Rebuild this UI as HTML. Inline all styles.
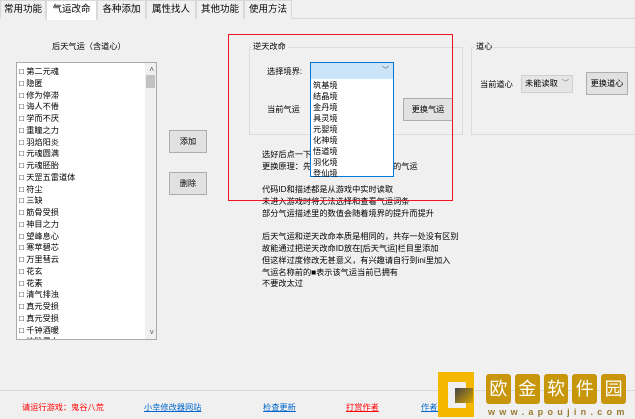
<!DOCTYPE html>
<html><head><meta charset="utf-8"><style>
*{box-sizing:border-box;margin:0;padding:0}
body{width:635px;height:419px;background:#f0f0f0;font-family:"Liberation Sans","Noto Sans CJK SC",sans-serif;font-size:8.2px;color:#000;position:relative;overflow:hidden}
.a{position:absolute;white-space:nowrap;line-height:12px}
.tab{position:absolute;top:0;height:19px;line-height:18px;text-align:center;border:1px solid #d9d9d9;border-bottom:none;background:#f0f0f0;font-size:9.5px}
.btn{position:absolute;background:#e1e1e1;border:1px solid #adadad;text-align:center}
.gb{position:absolute;border:1px solid #dcdcdc}
.gl{position:absolute;background:#f0f0f0;padding:0 2px;line-height:12px}
</style></head><body>
<div style="position:absolute;left:0;top:18px;width:635px;height:1px;background:#d9d9d9"></div>
<div class="tab" style="left:0;width:46px">常用功能</div>
<div class="tab" style="left:46px;width:51px;background:#fff;height:20px">气运改命</div>
<div class="tab" style="left:97px;width:49px">各种添加</div>
<div class="tab" style="left:146px;width:50px">属性找人</div>
<div class="tab" style="left:196px;width:48px">其他功能</div>
<div class="tab" style="left:244px;width:48px">使用方法</div>

<div class="a" style="left:52px;top:41px">后天气运（含道心）</div>
<div style="position:absolute;left:16px;top:62px;width:141px;height:278px;background:#fff;border:1px solid #aaa;overflow:hidden">
<div style="position:absolute;right:0;top:0;width:11px;height:100%;background:#f0f0f0"></div>
<div style="position:absolute;right:1px;top:12px;width:9px;height:13px;background:#c2c2c2"></div>
<div class="a" style="right:2px;top:1px;font-size:8px;color:#555">˄</div>
<div class="a" style="right:2px;bottom:0;font-size:8px;color:#555">˅</div>
<div style="position:absolute;left:2px;top:3px;line-height:11.75px">
□ 第二元魂<br>□ 隐匿<br>□ 修为停滞<br>□ 诲人不倦<br>□ 学而不厌<br>□ 重瞳之力<br>□ 羽焰阳炎<br>□ 元魂圆满<br>□ 元魂胚胎<br>□ 天罡五雷道体<br>□ 符尘<br>□ 三缺<br>□ 筋骨受损<br>□ 神目之力<br>□ 望峰息心<br>□ 寒苹碧芯<br>□ 万里彗云<br>□ 花玄<br>□ 花素<br>□ 清气排浊<br>□ 真元受损<br>□ 真元受损<br>□ 千钟酒暖<br>□ 地脉灵力</div>
</div>
<div class="btn" style="left:169px;top:130px;width:38px;height:23px;line-height:21px">添加</div>
<div class="btn" style="left:169px;top:172px;width:38px;height:23px;line-height:21px">删除</div>

<div class="gb" style="left:249px;top:47px;width:214px;height:88px"></div>
<div class="gl" style="left:251px;top:41px">逆天改命</div>
<div class="a" style="left:267px;top:66px">选择境界:</div>
<div class="a" style="left:267px;top:104px">当前气运</div>
<div class="btn" style="left:403px;top:98px;width:50px;height:23px;line-height:21px">更换气运</div>

<div class="gb" style="left:471px;top:47px;width:170px;height:88px"></div>
<div class="gl" style="left:474px;top:41px">道心</div>
<div class="a" style="left:480px;top:79px">当前道心</div>
<div style="position:absolute;left:521px;top:75px;width:52px;height:18px;background:#e5e5e5;border:1px solid #cfcfcf;line-height:16px;padding-left:3px">未能读取<span style="position:absolute;right:3px;font-size:7px;color:#666">﹀</span></div>
<div class="btn" style="left:586px;top:72px;width:42px;height:23px;line-height:21px">更换道心</div>

<div style="position:absolute;left:262px;top:149px;line-height:11.75px;white-space:nowrap">选好后点一下更换气运<br>更换原理：先选择境界再选择被替换的气运<br><br>代码ID和描述都是从游戏中实时读取<br>未进入游戏时将无法选择和查看气运词条<br>部分气运描述里的数值会随着境界的提升而提升<br><br>后天气运和逆天改命本质是相同的，共存一处没有区别<br>故能通过把逆天改命ID放在[后天气运]栏目里添加<br>但这样过度修改无甚意义，有兴趣请自行到ini里加入<br>气运名称前的■表示该气运当前已拥有<br>不要改太过</div>

<div style="position:absolute;left:310px;top:62px;width:84px;height:18px;background:#cce4f7;border:1px solid #0078d7"><span style="position:absolute;right:4px;top:2px;font-size:7px;color:#444">﹀</span></div>
<div style="position:absolute;left:310px;top:79px;width:84px;height:98px;background:#fff;border:1px solid #0078d7;border-top:none;padding:0 0 0 2px">
<div style="line-height:11px;margin-top:1px">筑基境<br>结晶境<br>金丹境<br>具灵境<br>元婴境<br>化神境<br>悟道境<br>羽化境<br>登仙境</div></div>

<div style="position:absolute;left:228px;top:34px;width:225px;height:167px;border:1px solid #f0141e"></div>

<div style="position:absolute;left:0;top:390px;width:635px;height:1px;background:#d8d8d8"></div>
<div class="a" style="left:22px;top:402px;color:#f00">请运行游戏：鬼谷八荒</div>
<div class="a" style="left:144px;top:402px;color:#06c;text-decoration:underline">小幸修改器网站</div>
<div class="a" style="left:263px;top:402px;color:#06c;text-decoration:underline">检查更新</div>
<div class="a" style="left:346px;top:402px;color:#f00;text-decoration:underline">打赏作者</div>
<div class="a" style="left:421px;top:402px;color:#06c;text-decoration:underline">作者主页</div>

<div style="position:absolute;left:438px;top:372px;width:36px;height:45px;background:#f5b800"></div>
<div style="position:absolute;left:448px;top:382px;width:18px;height:26px;background:#f0f0f0"></div>
<div style="position:absolute;left:455px;top:388px;width:18px;height:15px;background:linear-gradient(135deg,#444,#d8a400)"></div>
<div style="position:absolute;left:486px;top:374px;width:140px;height:30px;display:flex;gap:4px">
<div style="flex:1;background:#c8960a;color:#fff;font-size:18px;line-height:30px;text-align:center;border-radius:3px">欧</div>
<div style="flex:1;background:#c8960a;color:#fff;font-size:18px;line-height:30px;text-align:center;border-radius:3px">金</div>
<div style="flex:1;background:#c8960a;color:#fff;font-size:18px;line-height:30px;text-align:center;border-radius:3px">软</div>
<div style="flex:1;background:#c8960a;color:#fff;font-size:18px;line-height:30px;text-align:center;border-radius:3px">件</div>
<div style="flex:1;background:#c8960a;color:#fff;font-size:18px;line-height:30px;text-align:center;border-radius:3px">园</div>
</div>
<div class="a" style="left:488px;top:406px;font-size:9px;letter-spacing:4.3px;color:#9a7a30;font-weight:bold">www.apoujin.com</div>
</body></html>
